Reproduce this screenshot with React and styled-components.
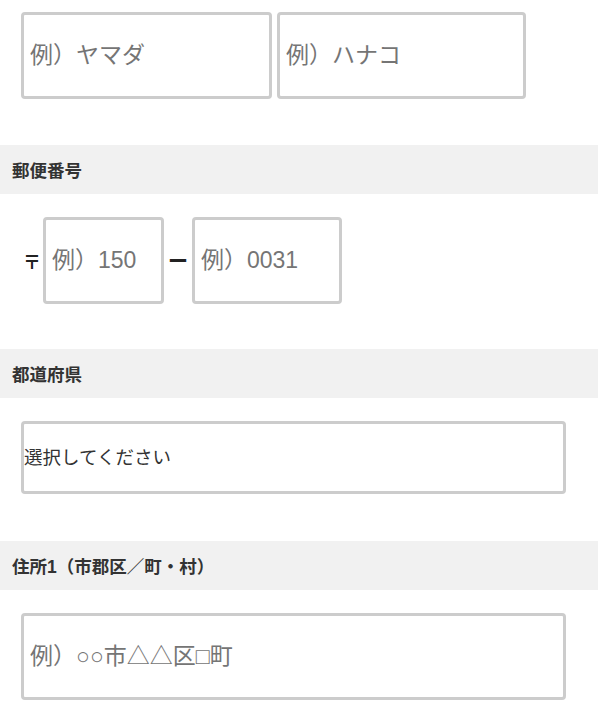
import React from "react";
import styled, { createGlobalStyle } from "styled-components";

const Global = createGlobalStyle`
  html, body { margin: 0; padding: 0; background: #fff; }
  body { font-family: "Liberation Sans", "Noto Sans CJK JP", sans-serif; color: #333; }
  * { box-sizing: border-box; }
`;

const Page = styled.div`
  width: 598px;
`;

const Body = styled.div`
  padding: ${(p) => p.$top ?? 23}px 21px ${(p) => p.$bottom ?? 46}px 21px;
`;

const Header = styled.div`
  height: 49px;
  background: #f1f1f1;
  display: flex;
  align-items: center;
  padding-left: 12px;
  font-family: "Liberation Sans", "Noto Sans CJK JP", sans-serif;
  font-weight: 700;
  font-size: 17.5px;
  color: #333;
`;

const Row = styled.div`
  display: flex;
  align-items: center;
  gap: ${(p) => p.$gap ?? 0}px;
`;

const Input = styled.input`
  width: ${(p) => p.$w}px;
  height: 87px;
  border: 3px solid #cccccc;
  border-radius: 4px;
  padding: 0 6px;
  font-family: "Liberation Sans", "Noto Sans CJK JP", sans-serif;
  font-size: 23px;
  color: #333;
  background: #fff;
  outline: none;
  &::placeholder { color: #757575; }
`;

const Select = styled.select`
  width: 545px;
  height: 73px;
  border: 3px solid #cccccc;
  border-radius: 4px;
  padding: 0;
  appearance: none;
  -webkit-appearance: none;
  background: #fff;
  font-family: "Liberation Sans", "Noto Sans CJK JP", sans-serif;
  font-size: 18.5px;
  color: #333;
  outline: none;
`;

const PostMark = styled.span`
  font-family: "Noto Sans CJK JP", sans-serif;
  font-size: 18px;
  font-weight: 700;
  color: #222;
  margin: 0 2px 0 2px;
`;

const Dash = styled.span`
  font-family: "Noto Sans CJK JP", sans-serif;
  font-size: 20px;
  font-weight: 700;
  color: #222;
  margin: 0 4px;
`;

export default function App() {
  return (
    <Page>
      <Global />
      <Body $top={12}>
        <Row $gap={5}>
          <Input $w={251} placeholder="例）ヤマダ" />
          <Input $w={249} placeholder="例）ハナコ" />
        </Row>
      </Body>

      <Header>郵便番号</Header>
      <Body $bottom={45}>
        <Row>
          <PostMark>〒</PostMark>
          <Input $w={121} placeholder="例）150" />
          <Dash>ー</Dash>
          <Input $w={150} placeholder="例）0031" />
        </Row>
      </Body>

      <Header>都道府県</Header>
      <Body $bottom={47}>
        <Select defaultValue="">
          <option value="">選択してください</option>
        </Select>
      </Body>

      <Header>住所1（市郡区／町・村）</Header>
      <Body>
        <Input $w={545} placeholder="例）○○市△△区□町" />
      </Body>
    </Page>
  );
}
